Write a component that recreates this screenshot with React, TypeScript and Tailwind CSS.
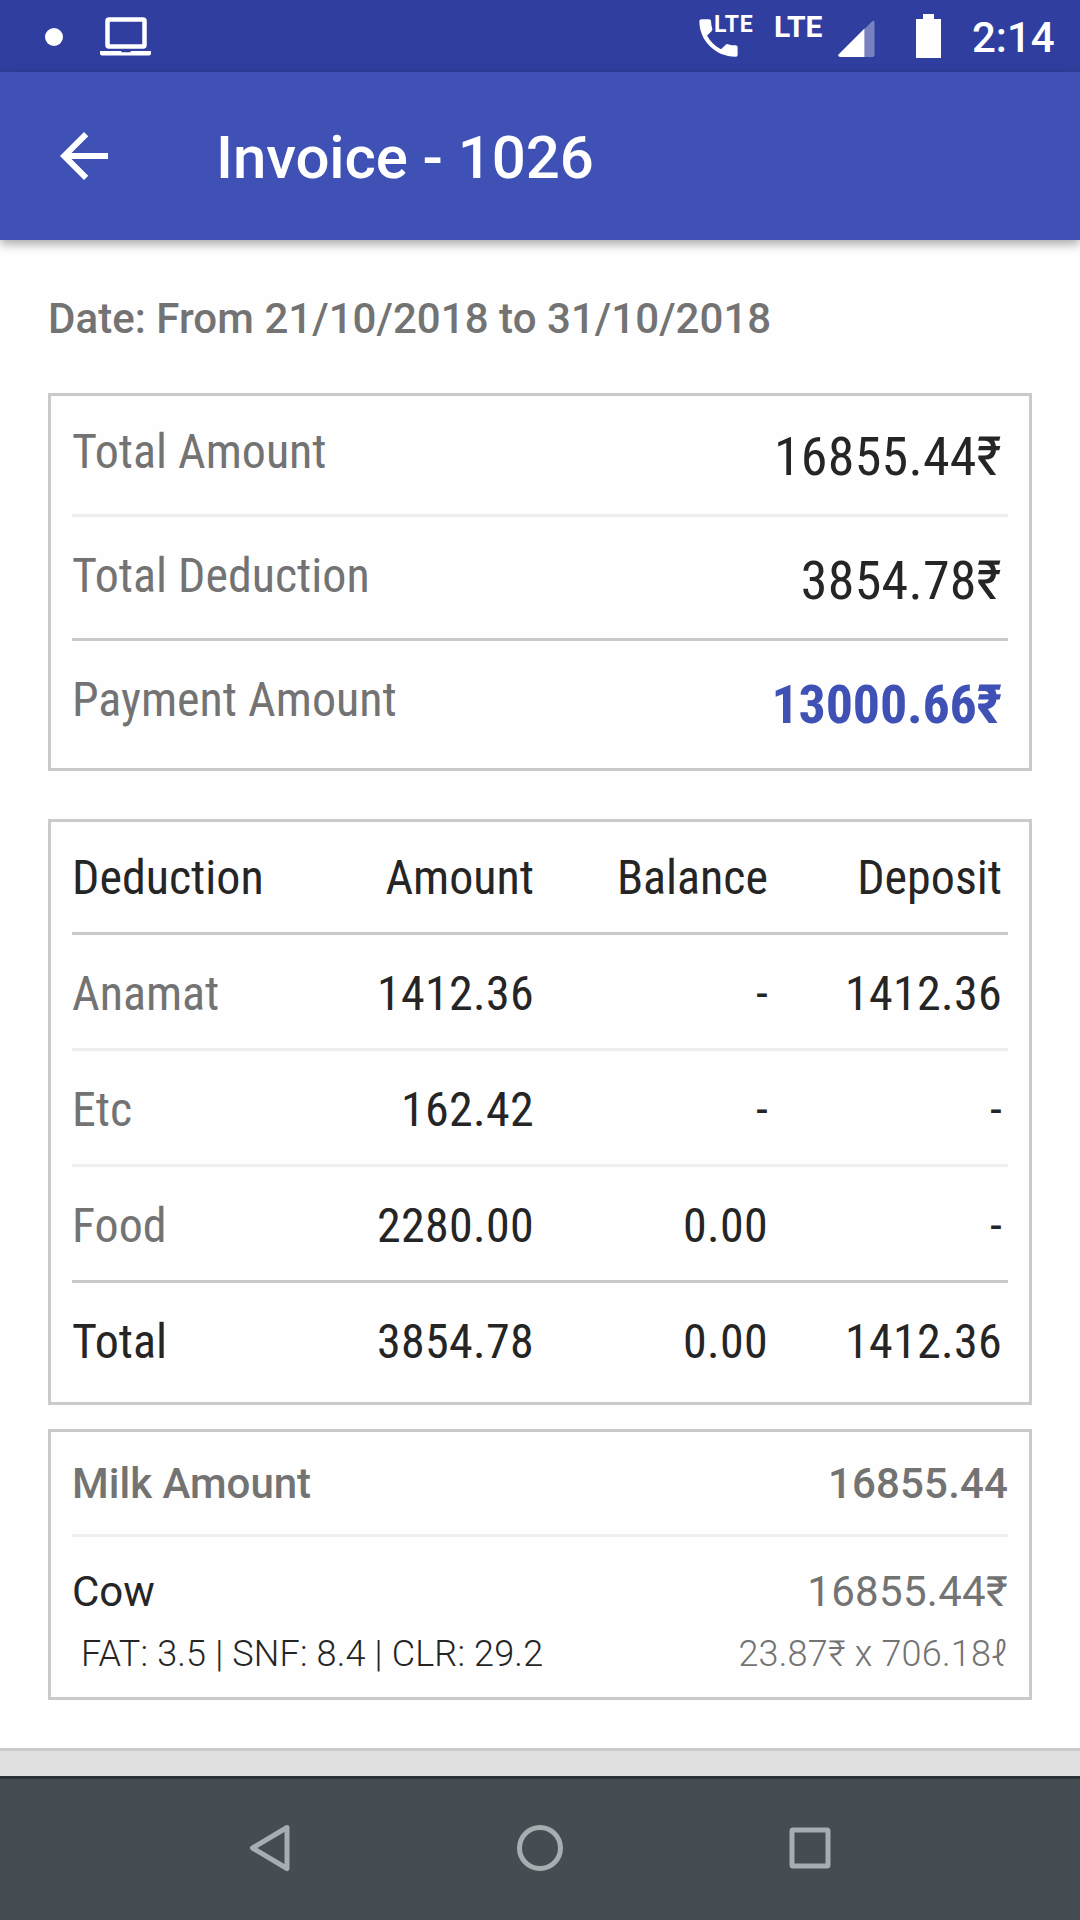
import type { ReactNode } from "react";

type Divider = "light" | "dark" | "none";

type SummaryRowProps = {
  label: string;
  value: string;
  divider: Divider;
  highlight?: boolean;
};

type DeductionRow = {
  name: string;
  amount: string;
  balance: string;
  deposit: string;
};

const DEDUCTIONS: DeductionRow[] = [
  { name: "Anamat", amount: "1412.36", balance: "-", deposit: "1412.36" },
  { name: "Etc", amount: "162.42", balance: "-", deposit: "-" },
  { name: "Food", amount: "2280.00", balance: "0.00", deposit: "-" },
];

const DIVIDERS: Record<Divider, string> = {
  light: "border-b-3 border-[#eeeeee]",
  dark: "border-b-3 border-[#cacaca]",
  none: "",
};

function StatusBar() {
  return (
    <div className="flex h-[72px] items-start bg-[#303f9f] text-white">
      <div className="mt-[28px] ml-[45px] h-[18px] w-[18px] rounded-full bg-white" />
      <svg className="mt-[17px] ml-[37px] h-[40px] w-[51px] shrink-0" viewBox="0 0 51 40" fill="none">
        <rect x="7.5" y="2.5" width="37" height="27" rx="1.5" stroke="white" strokeWidth="4.5" />
        <path d="M0 34h21c0 1 1 1.200 2 1.200h6c1 0 2-.2 2-1.200h20v2.500a2 2 0 0 1-2 2H2a2 2 0 0 1-2-2z" fill="white" />
      </svg>
      <div className="ml-[546px] flex pt-[16px]">
        <svg className="mt-[-3px] mr-[-33px] -ml-[4px] h-[50px] w-[51px] shrink-0" viewBox="0 0 24 24" preserveAspectRatio="none" fill="white">
          <path d="M6.620 10.790c1.440 2.830 3.760 5.140 6.590 6.590l2.200-2.200c.27-.27.67-.36 1.020-.24 1.120.37 2.330.57 3.570.57.55 0 1 .45 1 1V20c0 .55-.45 1-1 1-9.390 0-17-7.610-17-17 0-.55.45-1 1-1h3.500c.55 0 1 .45 1 1 0 1.250.2 2.450.57 3.570.11.35.03.74-.25 1.020z" />
        </svg>
        <span className="h-[16px] w-[40px] pl-[3px] text-[23px] leading-[17px] font-bold tracking-[0.8px]">
          LTE
        </span>
      </div>
      <span className="mt-[16px] ml-[23px] w-[51px] text-[30px] leading-[21px] font-bold">LTE</span>
      <svg className="mt-[20px] ml-[13px] h-[37px] w-[37px] shrink-0" viewBox="0 0 37 37" fill="white">
        <path d="M26.500 9 34 1.500Q36.500-.5 36.500 3V35q0 2-2 2h-8z" opacity=".35" />
        <path d="M26.500 8.500V37H2.500Q-1 36.500 1 34z" />
      </svg>
      <svg className="mt-[14px] ml-[41px] h-[44px] w-[25px] shrink-0" viewBox="0 0 25 44" fill="white">
        <path d="M7 0h11v5h7v39H0V5h7z" />
      </svg>
      <span className="mt-[14px] ml-[31px] text-[42px] leading-[48px] font-medium">2:14</span>
    </div>
  );
}

function AppBar() {
  return (
    <header className="relative z-10 flex h-[168px] items-center bg-[#3f51b5] px-12 text-white shadow-[0_4px_10px_rgba(0,0,0,0.35)]">
      <button type="button" aria-label="Back" className="h-[72px] w-[72px]">
        <svg className="h-full w-full" viewBox="0 0 24 24" fill="white">
          <path d="M20 11H7.830l5.590-5.590L12 4l-8 8 8 8 1.410-1.410L7.830 13H20z" />
        </svg>
      </button>
      <h1 className="ml-24 pt-[4px] text-[60px] leading-[70px] font-medium tracking-[-0.1px]">
        Invoice - 1026
      </h1>
    </header>
  );
}

function Card({ className, children }: { className: string; children: ReactNode }) {
  return (
    <section className={`border-3 border-[#cacaca] px-[21px] ${className}`}>{children}</section>
  );
}

function SummaryRow({ label, value, divider, highlight }: SummaryRowProps) {
  return (
    <div
      className={`flex h-[124px] justify-between pr-[6px] font-['Roboto_Condensed',Roboto,sans-serif] [font-stretch:75%] ${DIVIDERS[divider]}`}
    >
      <span className="pt-[31px] text-[48px] leading-[56px] text-[#737373]">{label}</span>
      <span
        className={`pt-[32px] text-[54px] leading-[64px] ${
          highlight ? "font-bold tracking-[-0.2px] text-[#3f51b5]" : "tracking-[0.25px] text-[#252525]"
        }`}
      >
        {value}
      </span>
    </div>
  );
}

function TableRow({
  cells,
  divider,
  muted,
}: {
  cells: string[];
  divider: Divider;
  muted?: boolean;
}) {
  return (
    <div
      className={`grid h-[116px] grid-cols-4 pt-[31px] font-['Roboto_Condensed',Roboto,sans-serif] text-[48px] leading-[56px] text-[#252525] [font-stretch:75%] ${DIVIDERS[divider]}`}
    >
      {cells.map((cell, i) => (
        <span
          key={i}
          className={
            i === 0
              ? muted
                ? "text-[#737373]"
                : ""
              : `pr-[6px] text-right ${/\d/.test(cell) ? "tracking-[0.3px]" : ""}`
          }
        >
          {cell}
        </span>
      ))}
    </div>
  );
}

function NavBar() {
  return (
    <nav className="flex h-[144px] items-center justify-between border-t-3 border-[#2a3335] bg-[#454d52] px-[246px] pb-[4px]">
      <svg className="h-12 w-12" viewBox="0 0 48 48" fill="none" stroke="#a7aeb1" strokeWidth="5">
        <path d="M41 3.500 6.500 24 41 44.500z" strokeLinejoin="round" />
      </svg>
      <svg className="h-12 w-12" viewBox="0 0 48 48" fill="none" stroke="#a7aeb1" strokeWidth="5">
        <circle cx="24" cy="24" r="20.500" />
      </svg>
      <svg className="h-12 w-12" viewBox="0 0 48 48" fill="none" stroke="#a7aeb1" strokeWidth="5">
        <rect x="6" y="6" width="36" height="36" rx="1" />
      </svg>
    </nav>
  );
}

export default function App() {
  return (
    <div className="flex h-[1920px] w-[1080px] flex-col overflow-hidden bg-[#fefefe] font-[Roboto,sans-serif]">
      <StatusBar />
      <AppBar />

      <main className="flex-1 px-12 pt-[54px]">
        <p className="text-[42px] leading-[49px] font-medium tracking-[0.05px] text-[#737373]">
          Date: From 21/10/2018 to 31/10/2018
        </p>

        <Card className="mt-[50px] h-[378px]">
          <div className="-mt-[3px]">
            <SummaryRow label="Total Amount" value="16855.44₹" divider="light" />
            <SummaryRow label="Total Deduction" value="3854.78₹" divider="dark" />
            <SummaryRow label="Payment Amount" value="13000.66₹" divider="none" highlight />
          </div>
        </Card>

        <Card className="mt-12 h-[586px]">
          <div className="-mt-[3px]">
            <TableRow cells={["Deduction", "Amount", "Balance", "Deposit"]} divider="dark" />
            {DEDUCTIONS.map((d, i) => (
              <TableRow
                key={d.name}
                cells={[d.name, d.amount, d.balance, d.deposit]}
                divider={i === DEDUCTIONS.length - 1 ? "dark" : "light"}
                muted
              />
            ))}
            <TableRow cells={["Total", "3854.78", "0.00", "1412.36"]} divider="none" />
          </div>
        </Card>

        <Card className="mt-[24px] h-[271px]">
          <div className="flex h-[105px] justify-between border-b-3 border-[#eeeeee] pt-[27px] text-[42px] leading-[49px] font-medium text-[#737373]">
            <span>Milk Amount</span>
            <span className="tracking-[0.15px]">16855.44</span>
          </div>
          <div className="flex justify-between pt-[30px] text-[42px] leading-[49px]">
            <span className="text-[#252525]">Cow</span>
            <span className="tracking-[0.3px] text-[#737373]">16855.44₹</span>
          </div>
          <div className="flex justify-between pt-[17px] text-[36px] leading-[43px] font-light">
            <span className="pl-[9px] tracking-[0.17px] text-[#252525]">
              FAT: 3.5 | SNF: 8.4 | CLR: 29.2
            </span>
            <span className="tracking-[0.2px] text-[#737373]">23.87₹ x 706.18ℓ</span>
          </div>
        </Card>
      </main>

      <div className="h-[28px] border-t-3 border-[#cacaca] bg-[#e0e0e0]" />
      <NavBar />
    </div>
  );
}
